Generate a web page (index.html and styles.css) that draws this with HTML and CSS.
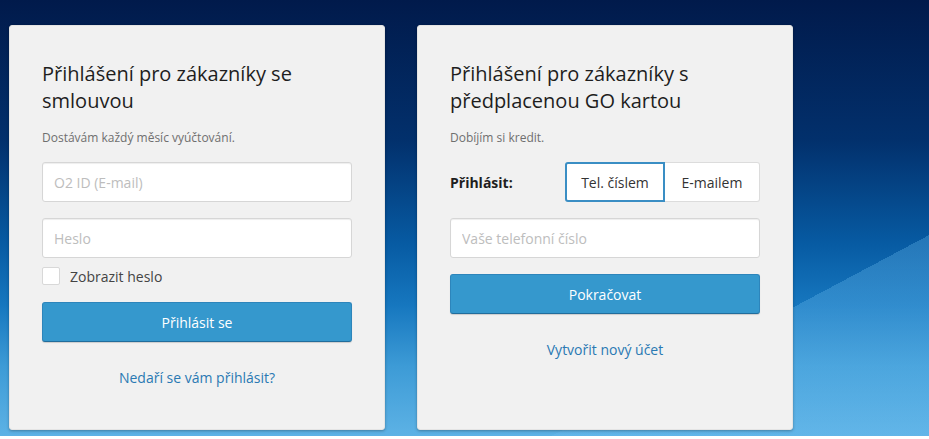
FILE: index.html
```html
<!DOCTYPE html>
<html lang="cs">
<head>
<meta charset="utf-8">
<title>Přihlášení</title>
<link rel="stylesheet" href="styles.css">
</head>
<body>
<div class="page">
  <section class="card">
    <h2 class="card-title">Přihlášení pro zákazníky se smlouvou</h2>
    <p class="card-sub">Dostávám každý měsíc vyúčtování.</p>
    <input class="field" type="text" placeholder="O2 ID (E-mail)">
    <input class="field field-gap" type="password" placeholder="Heslo">
    <label class="check-row"><span class="check-box"></span><span>Zobrazit heslo</span></label>
    <button class="btn btn-login">Přihlásit se</button>
    <a class="card-link" href="#">Nedaří se vám přihlásit?</a>
  </section>
  <section class="card">
    <h2 class="card-title">Přihlášení pro zákazníky s předplacenou GO kartou</h2>
    <p class="card-sub">Dobíjím si kredit.</p>
    <div class="toggle-row">
      <span class="toggle-label">Přihlásit:</span>
      <div class="toggle">
        <span class="toggle-opt toggle-active">Tel. číslem</span>
        <span class="toggle-opt toggle-email">E-mailem</span>
      </div>
    </div>
    <input class="field field-gap" type="text" placeholder="Vaše telefonní číslo">
    <button class="btn btn-continue">Pokračovat</button>
    <a class="card-link" href="#">Vytvořit nový účet</a>
  </section>
</div>
</body>
</html>
```
FILE: styles.css
```css
* { box-sizing: border-box; }
html, body { margin: 0; padding: 0; background: #ffffff; }
body { font-family: "Open Sans", "Liberation Sans", sans-serif; color: #222; }

.page {
  height: 436px;
  padding: 25px 0 0 9px;
  display: flex;
  gap: 32px;
  align-items: flex-start;
  background:
    linear-gradient(152deg, rgba(0,0,0,0) 78.4%, rgba(110,190,240,0.30) 78.4%),
    linear-gradient(to bottom, #011a4b 0%, #02306c 32%, #075ba3 56%, #1677bf 70%, #3d9bd6 84%, #5db2e5 100%);
  overflow: hidden;
}

.card {
  width: 376px;
  height: 405px;
  background: #f1f1f1;
  border: 1px solid #e4e4e4;
  border-radius: 3px;
  box-shadow: 0 1px 3px rgba(0,0,0,0.3);
  padding: 34px 32px 0 32px;
  display: flex;
  flex-direction: column;
}

.card-title {
  margin: 0;
  font-size: 20px;
  line-height: 27px;
  font-weight: 400;
  color: #1e1e1e;
}

.card-sub {
  margin: 15px 0 16px 0;
  font-size: 12px;
  line-height: 17px;
  color: #6f6f6f;
}

.field {
  display: block;
  width: 100%;
  height: 40px;
  border: 1px solid #d6d6d6;
  border-radius: 3px;
  background: #fff;
  padding: 0 11px;
  font-family: "Open Sans", "Liberation Sans", sans-serif;
  font-size: 14px;
  color: #333;
  box-shadow: inset 0 1px 1px rgba(0,0,0,0.07);
  outline: none;
}
.field::placeholder { color: #bdbdbd; }
.field-gap { margin-top: 16px; }

.check-row {
  display: flex;
  align-items: center;
  gap: 10px;
  margin-top: 9px;
  height: 18px;
  font-size: 14px;
  color: #444;
}
.check-box {
  width: 18px;
  height: 18px;
  background: #fff;
  border: 1px solid #d8d8d8;
  border-radius: 2px;
}

.btn {
  display: block;
  width: 100%;
  height: 40px;
  border: 1px solid #2d85bb;
  border-bottom-color: #216d9c;
  border-radius: 3px;
  background: #3598cd;
  color: #fff;
  font-family: "Open Sans", "Liberation Sans", sans-serif;
  font-size: 14px;
  box-shadow: 0 1px 1px rgba(0,0,0,0.15);
}
.btn-login { margin-top: 17px; }
.btn-continue { margin-top: 16px; }

.card-link {
  display: block;
  margin-top: 26px;
  text-align: center;
  font-size: 14px;
  line-height: 20px;
  color: #2a79b3;
  text-decoration: none;
}

.toggle-row {
  display: flex;
  align-items: center;
  height: 40px;
}
.toggle-label {
  flex: 1;
  font-size: 14px;
  font-weight: 700;
  color: #1e1e1e;
}
.toggle {
  display: flex;
  height: 40px;
}
.toggle-opt {
  display: flex;
  align-items: center;
  justify-content: center;
  background: #fff;
  font-size: 14px;
  color: #333;
}
.toggle-active {
  width: 100px;
  border: 2px solid #3a8ec4;
  border-radius: 3px 0 0 3px;
}
.toggle-email {
  width: 95px;
  border: 1px solid #dcdcdc;
  border-left: none;
  border-radius: 0 3px 3px 0;
}
```
